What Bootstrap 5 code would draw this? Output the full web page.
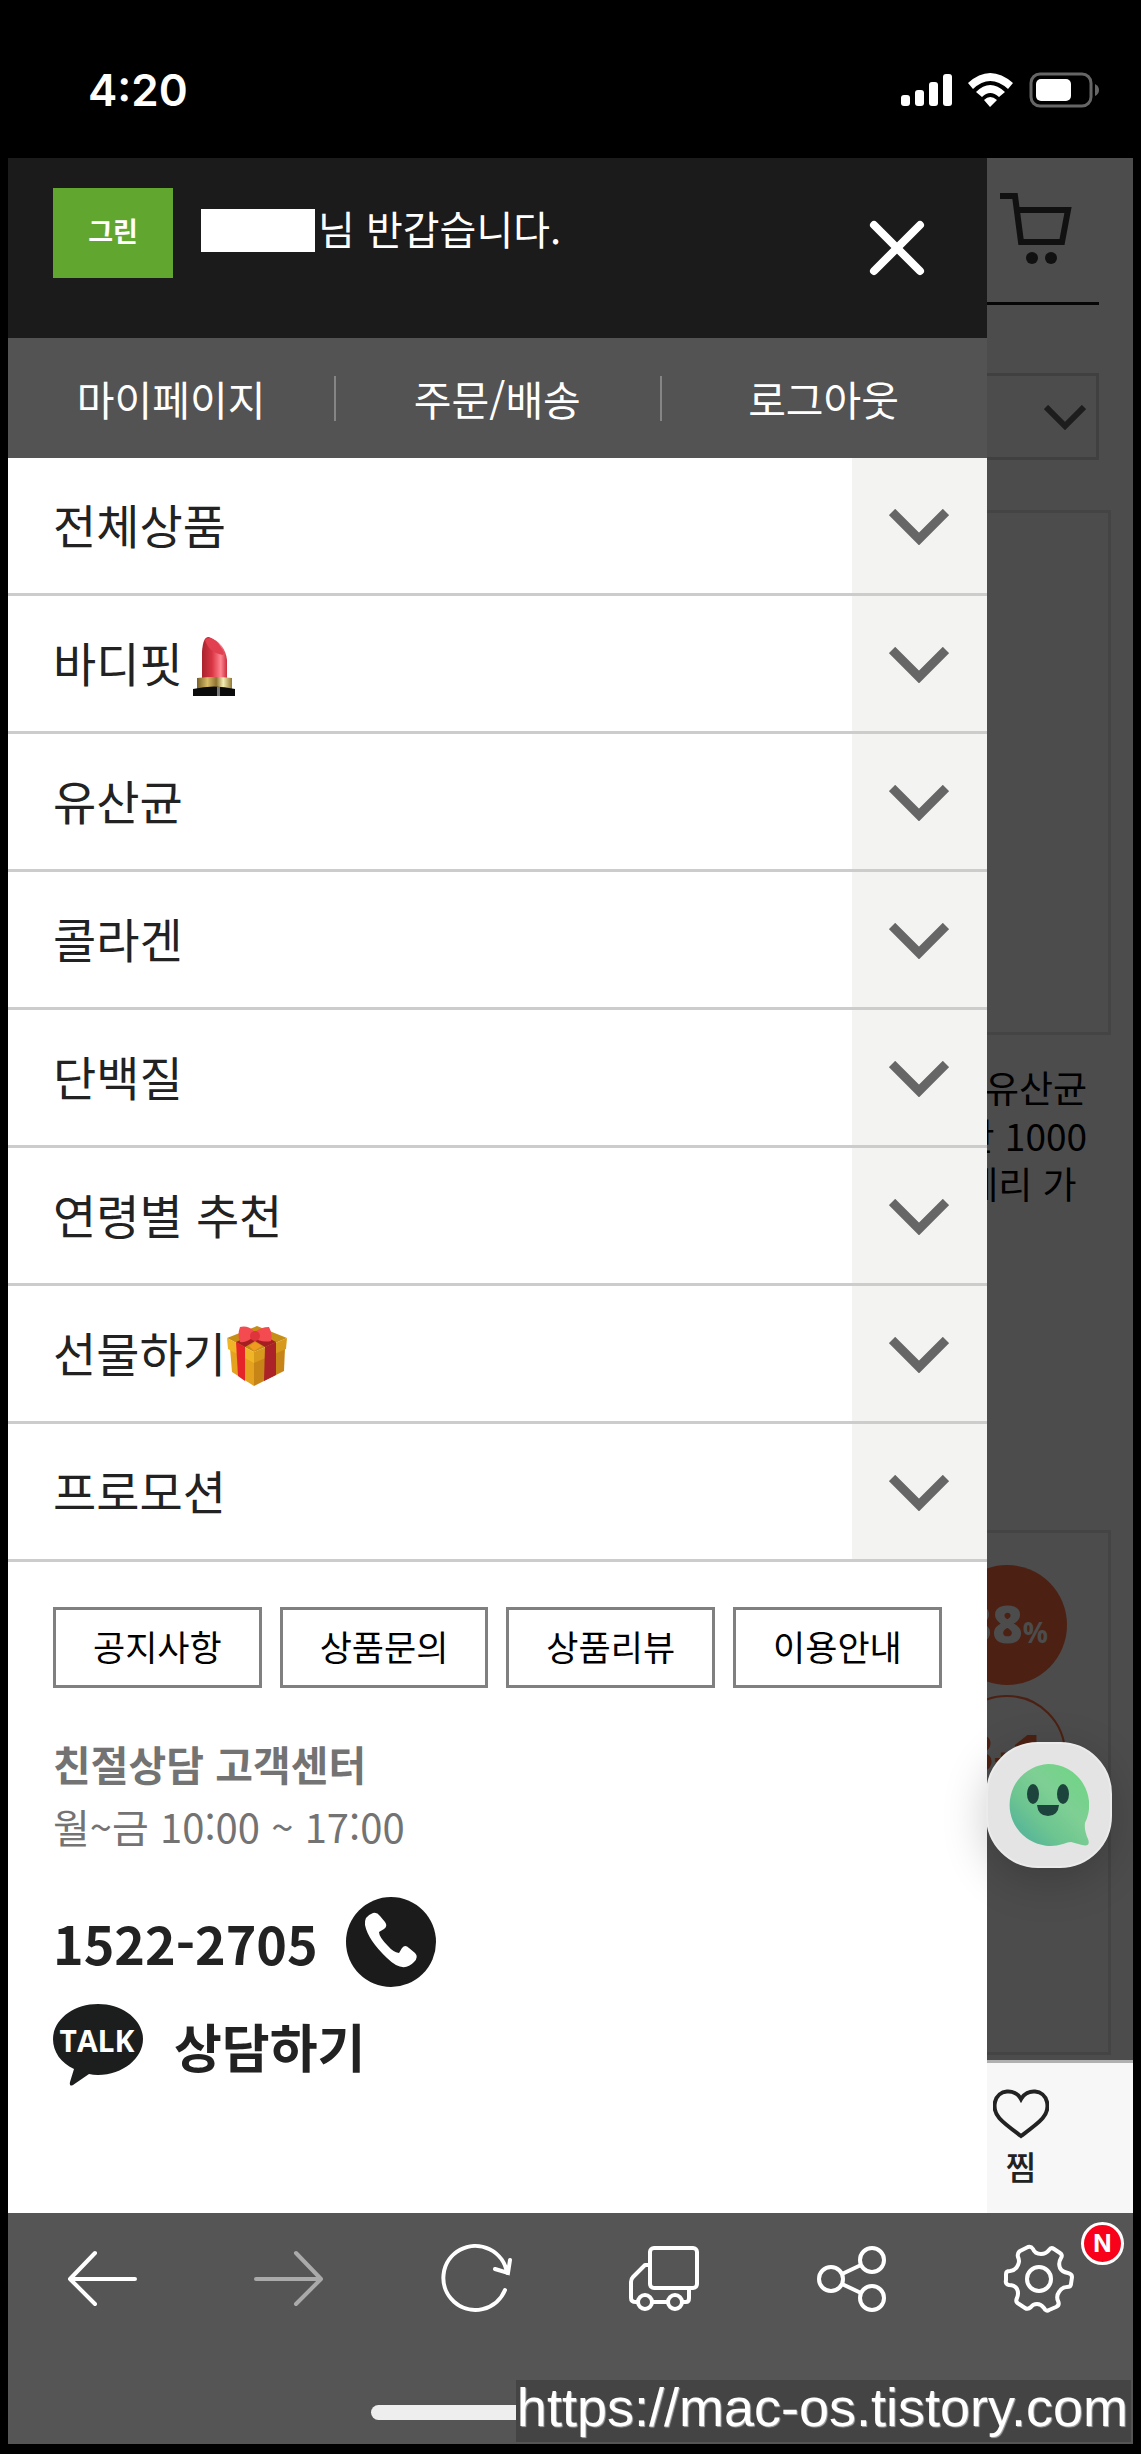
<!DOCTYPE html>
<html lang="ko">
<head>
<meta charset="utf-8">
<meta name="viewport" content="width=device-width, initial-scale=1">
<title>전체 메뉴</title>
<link href="https://cdn.jsdelivr.net/npm/bootstrap@5.3.0/dist/css/bootstrap.min.css" rel="stylesheet">
<style>
  body { background: #000; color: #222; font-family: "Noto Sans CJK KR", sans-serif; }
  a { color: inherit; text-decoration: none; }
  svg { display: block; flex: none; }
  button { color: inherit; }
  .status { height: 158px; padding: 22px 42px 0 88px; font: 600 44px/1 Inter, sans-serif; }
  .phone { padding: 0 8px 10px; }

  .drawer { flex: 0 0 87%; background: #fff; padding-bottom: 126px; }
  .drawer-top { background: #1b1b1b; height: 180px; padding: 30px 45px; font-size: 40px; line-height: 60px; }
  .brand { width: 120px; height: 90px; background: #61a72f; font-size: 27px; font-weight: 700; line-height: 86px; }
  .masked { width: 114px; height: 43px; margin-right: 3px; background: #fff; }
  .hello { height: 84px; }
  .hello span + span { padding-bottom: 4px; }
  .close-btn { padding: 0; margin: 31px 16px 0 0; }
  .tabs { background: #535353; height: 120px; font-size: 41px; line-height: 58px; }
  .tabs a + a::before { content: ""; position: absolute; left: 0; top: 7px; width: 2px; height: 45px; background: #858585; }

  .menu li { border-bottom: 3px solid #ccc; font-size: 47px; line-height: 60px; }
  .menu a { height: 135px; padding: 0 0 3px 45px; }
  .menu a svg { margin: 7px 0 0 1px; }
  .menu button { width: 135px; padding-top: 9px; background: #f3f3f1; }

  .quick { display: grid; grid-template-columns: repeat(4, 1fr); gap: 18px; padding: 45px 45px 0; }
  .quick a { height: 81px; border: 3px solid #808080; color: #000; font-size: 35px; line-height: 72px; }
  .center-info { padding: 44px 45px 0; color: #737373; font-size: 40px; line-height: 63px; }
  .center-info .fw-bold { font-size: 41px; }
  .contact { padding: 39px 45px 0; font-size: 52px; line-height: 81px; font-weight: 700; }

  .behind { min-width: 0; background: #4c4c4c; color: #000; }
  .cart-row { height: 147px; border-bottom: 3px solid #060606; margin-right: 34px; padding: 35px 27px 0 0; }
  .sorter { margin: 68px 34px 50px 0; }
  .sorter select { appearance: none; height: 87px; background: none; border: 3px solid #404040; border-left: 0; border-radius: 0; }
  .sorter svg { position: absolute; right: 13px; top: 32px; }
  .thumb { height: 525px; margin-right: 22px; border: 3px solid #444; border-left: 0; }
  .thumb svg { margin: 32px 39px 0 0; }
  .goods { height: 495px; padding: 28px 46px 0 0; font-size: 37px; line-height: 48px; }
  .wish { height: 153px; margin-top: 5px; background: #f7f7f7; border-top: 3px solid #b0b0b0; color: #222; padding: 26px 84px 0 0; }
  .wish a { width: 56px; font-size: 33px; line-height: 48px; font-weight: 500; }
  .wish svg { margin-bottom: 3px; }
  .chat { right: 21px; top: 1584px; width: 126px; height: 126px; padding: 0 2px 0 0; border: 2px solid #ebebeb; border-radius: 52px; background: #e4e4e4; box-shadow: 0 12px 45px rgba(0,0,0,.2); }

  .browser-bar { background: #555; height: 231px; }
  .browser-bar .tools { height: 131px; }
  .tools button { padding: 0; }
  .new-badge { right: 9px; top: 9px; width: 43px; height: 43px; border: 3px solid #fff; background: #f8021b; font: 700 24px/37px Inter, sans-serif; }
  .home-line { width: 400px; height: 15px; border-radius: 8px; background: #eee; margin-top: 61px; }
  .site-mark { right: 2px; bottom: 2px; height: 62px; padding: 0 3px 0 1px; background: #444; font: 54px/54px "Liberation Sans", sans-serif; text-shadow: 1px 1px 1px #aaa; }
</style>
</head>
<body>
<svg width="0" height="0" class="position-absolute" aria-hidden="true">
  <symbol id="down" viewBox="0 0 60 36"><path d="M3 3 30 30 57 3" fill="none" stroke="#666" stroke-width="9"/></symbol>
</svg>

<header class="status d-flex align-items-center justify-content-between text-white">
  <span>4:20</span>
  <svg width="199" height="36" viewBox="0 0 199 36" fill="#fff">
    <rect x="1" y="23" width="9" height="11" rx="3"/><rect x="15" y="18" width="9" height="16" rx="3"/><rect x="29" y="10" width="9" height="24" rx="3"/><rect x="43" y="2" width="9" height="32" rx="3"/>
    <path d="M68 11Q90-9 113 11L108 17Q90 1 73 17ZM76 20Q90 6 105 20L99 25Q90 17 82 25ZM84 28Q90 22 97 28L90 35Z"/>
    <rect x="131" y="2" width="60" height="32" rx="9" fill="none" stroke="#666" stroke-width="3"/>
    <rect x="136" y="7" width="35" height="22" rx="5"/><path d="M195 12q4 2 4 6t-4 6Z" fill="#666"/>
  </svg>
</header>

<div class="phone">
  <div class="position-relative d-flex">
    <nav class="drawer" aria-label="전체 메뉴">
      <div class="drawer-top d-flex text-white">
        <div class="brand text-center">그린</div>
        <div class="hello d-flex align-items-center ms-4 ps-1 flex-grow-1"><span class="masked"></span><span>님 반갑습니다.</span></div>
        <button class="btn close-btn align-self-start border-0" aria-label="닫기">
          <svg width="58" height="58" viewBox="0 0 58 58"><path d="M6 6 52 52M52 6 6 52" stroke="#fff" stroke-width="8" stroke-linecap="round"/></svg>
        </button>
      </div>
      <div class="tabs d-flex align-items-center text-white text-center">
        <a class="col-4" href="#">마이페이지</a><a class="col-4 position-relative" href="#">주문/배송</a><a class="col-4 position-relative" href="#">로그아웃</a>
      </div>
      <ul class="menu list-unstyled mb-0">
        <li class="d-flex"><a class="flex-grow-1 d-flex align-items-center" href="#">전체상품</a><button class="btn rounded-0 border-0 d-flex align-items-center justify-content-center" aria-label="전체상품 펼치기"><svg width="60" height="36"><use href="#down"/></svg></button></li>
        <li class="d-flex"><a class="flex-grow-1 d-flex align-items-center" href="#">바디핏
          <svg width="60" height="60" viewBox="0 0 60 60">
            <defs><linearGradient id="lip"><stop stop-color="#a8242f"/><stop offset=".4" stop-color="#d93543"/><stop offset=".75" stop-color="#ff8590"/><stop offset="1" stop-color="#c92c3c"/></linearGradient>
            <linearGradient id="gold"><stop stop-color="#766026"/><stop offset=".3" stop-color="#d9bc68"/><stop offset=".55" stop-color="#8f7430"/><stop offset=".75" stop-color="#f5eeb4"/><stop offset="1" stop-color="#927931"/></linearGradient></defs>
            <path d="M18 43V16Q19 0 25 1 41 7 43 24V43Z" fill="url(#lip)"/><path d="M21 4Q25-1 34 7 42 17 39 19 25 17 21 4Z" fill="#e04050"/>
            <path d="M13 42Q30 40 48 42V54H13Z" fill="url(#gold)"/><path d="M9 53Q30 48 51 53V60H9Z" fill="#0b0b0b"/><path d="M33 51h3v9h-3Z" fill="#777"/>
          </svg></a><button class="btn rounded-0 border-0 d-flex align-items-center justify-content-center" aria-label="바디핏 펼치기"><svg width="60" height="36"><use href="#down"/></svg></button></li>
        <li class="d-flex"><a class="flex-grow-1 d-flex align-items-center" href="#">유산균</a><button class="btn rounded-0 border-0 d-flex align-items-center justify-content-center" aria-label="유산균 펼치기"><svg width="60" height="36"><use href="#down"/></svg></button></li>
        <li class="d-flex"><a class="flex-grow-1 d-flex align-items-center" href="#">콜라겐</a><button class="btn rounded-0 border-0 d-flex align-items-center justify-content-center" aria-label="콜라겐 펼치기"><svg width="60" height="36"><use href="#down"/></svg></button></li>
        <li class="d-flex"><a class="flex-grow-1 d-flex align-items-center" href="#">단백질</a><button class="btn rounded-0 border-0 d-flex align-items-center justify-content-center" aria-label="단백질 펼치기"><svg width="60" height="36"><use href="#down"/></svg></button></li>
        <li class="d-flex"><a class="flex-grow-1 d-flex align-items-center" href="#">연령별 추천</a><button class="btn rounded-0 border-0 d-flex align-items-center justify-content-center" aria-label="연령별 추천 펼치기"><svg width="60" height="36"><use href="#down"/></svg></button></li>
        <li class="d-flex"><a class="flex-grow-1 d-flex align-items-center" href="#">선물하기
          <svg width="60" height="60" viewBox="0 0 60 60">
            <path d="M3 22 27 33V60L5 46Z" fill="#e5a21f"/><path d="M27 33 58 22 57 45 27 60Z" fill="#c78517"/>
            <path d="M0 12 30 0 60 12 27 26Z" fill="#c78e17"/><path d="M0 12 27 26V37L1 23Z" fill="#f0b526"/><path d="M27 26 60 12 59 23 27 37Z" fill="#d79a1c"/>
            <path d="M9 16 18 21V55L11 50Z" fill="#e5242a"/><path d="M38 21 49 16V49L37 55Z" fill="#ab2228"/><path d="M9 16 30 6 49 16 38 21 28 15 18 21Z" fill="#a51f22"/>
            <path d="M22 20 28 16 35 20 27 25Z" fill="#f09a20"/>
            <path d="M13 1Q10 9 13 16 20 17 26 11 33 17 44 15 46 8 42 1 34 1 28 6 21-1 13 1Z" fill="#f44b50"/><circle cx="28" cy="10" r="5" fill="#df343b"/>
          </svg></a><button class="btn rounded-0 border-0 d-flex align-items-center justify-content-center" aria-label="선물하기 펼치기"><svg width="60" height="36"><use href="#down"/></svg></button></li>
        <li class="d-flex"><a class="flex-grow-1 d-flex align-items-center" href="#">프로모션</a><button class="btn rounded-0 border-0 d-flex align-items-center justify-content-center" aria-label="프로모션 펼치기"><svg width="60" height="36"><use href="#down"/></svg></button></li>
      </ul>
      <div class="quick text-center"><a href="#">공지사항</a><a href="#">상품문의</a><a href="#">상품리뷰</a><a href="#">이용안내</a></div>
      <div class="center-info"><div class="fw-bold">친절상담 고객센터</div><div>월~금 10:00 ~ 17:00</div></div>
      <div class="contact">
        <a class="d-flex align-items-center" href="tel:1522-2705">1522-2705
          <svg class="ms-4" width="94" height="90" viewBox="-4 0 94 90"><circle cx="45" cy="45" r="45" fill="#1b1b1b"/><path d="M27 16Q31 15 34 19L39 25Q42 29 38 32L33 35Q33 40 42 49 47 55 53 56L56 51Q59 47 63 51L69 56Q73 60 68 65 57 77 41 61 22 43 19 28 18 19 27 16Z" fill="#fff"/></svg></a>
        <a class="d-flex align-items-center mt-3" href="#">
          <svg class="me-4" width="97" height="84" viewBox="0 0 97 84"><path d="M45 1C70 1 90 17 90 36S70 72 45 72Q40 72 36 71L20 82Q16 84 17 79L21 66C8 60 0 49 0 36 0 17 20 1 45 1Z" fill="#1c1e1d"/><text x="44" y="49" text-anchor="middle" font-family="Open Sans, sans-serif" font-weight="700" font-size="30" fill="#fff">TALK</text></svg>상담하기</a>
      </div>
    </nav>

    <main class="behind flex-grow-1 overflow-hidden">
      <div class="cart-row d-flex justify-content-end">
        <svg width="72" height="71" viewBox="0 0 72 71"><path d="M0 3H15L21 49H62L68 17H18" fill="none" stroke="#111" stroke-width="6"/><circle cx="32" cy="65" r="6" fill="#111"/><circle cx="51" cy="65" r="6" fill="#111"/></svg>
      </div>
      <div class="sorter position-relative"><select class="w-100 d-block" aria-label="정렬"><option></option></select>
        <svg width="42" height="25" viewBox="0 0 42 25"><path d="M2 2 21 21 40 2" fill="none" stroke="#1d1d1d" stroke-width="6"/></svg></div>
      <div class="thumb"></div>
      <div class="goods text-nowrap">
        <div class="d-flex justify-content-end">유산균</div><div class="d-flex justify-content-end">만 1000</div><div class="d-flex justify-content-end">베리 가&nbsp;</div>
      </div>
      <div class="thumb d-flex justify-content-end">
        <svg width="124" height="254" viewBox="-2 0 124 254"><circle cx="60" cy="60" r="60" fill="#4c2113"/><g font-family="Open Sans, sans-serif" font-weight="800" text-anchor="end"><text x="101" y="78" font-size="52" fill="#4c4c4c">38<tspan font-size="28" font-weight="700">%</tspan></text><text x="96" y="207" font-size="52" fill="#4c2113">3<tspan font-size="32">+</tspan>1</text></g><circle cx="60" cy="189" r="58" fill="none" stroke="#4c2113" stroke-width="2"/></svg>
      </div>
      <div class="wish d-flex justify-content-end">
        <a class="text-center" href="#"><svg width="56" height="50" viewBox="0 0 56 50"><path d="M28 10C22-1 5 0 2 13-1 26 9 33 28 47 47 33 57 26 54 13 51 0 34-1 28 10Z" fill="none" stroke="#222" stroke-width="4"/></svg>찜</a>
      </div>
    </main>

    <button class="chat position-absolute" aria-label="채팅 상담">
      <svg class="mx-auto" width="82" height="82" viewBox="0 0 82 82">
        <defs><linearGradient id="face" x1="0" y1="1" x2="1" y2="0"><stop stop-color="#49aca0"/><stop offset=".35" stop-color="#6dc590"/><stop offset=".6" stop-color="#7ecf94"/><stop offset="1" stop-color="#6bd780"/></linearGradient></defs>
        <path d="M41 0A41 41 0 0 1 78 59Q77 66 81 75 84 83 75 81L64 78Q61 78 56 80A41 41 0 1 1 41 0Z" fill="url(#face)"/>
        <ellipse cx="26" cy="30" rx="6" ry="10" fill="#1d443c"/><ellipse cx="56" cy="30" rx="6" ry="10" fill="#1d443c"/><path d="M30 41H52Q51 52 41 52T30 41Z" fill="#1d443c"/>
      </svg>
    </button>
  </div>

  <footer class="browser-bar position-relative">
    <div class="tools d-flex">
      <button class="btn border-0 col-2 d-flex align-items-center justify-content-center" aria-label="뒤로"><svg width="72" height="72" viewBox="0 0 72 72" fill="none" stroke="#fff" stroke-width="4" stroke-linecap="round" stroke-linejoin="round"><path d="M69 36H4M29 10 4 36 29 61"/></svg></button>
      <button class="btn border-0 col-2 d-flex align-items-center justify-content-center" aria-label="앞으로"><svg width="72" height="72" viewBox="0 0 72 72" fill="none" stroke="#aaa" stroke-width="4" stroke-linecap="round" stroke-linejoin="round"><path d="M3 36H68M43 10 68 36 43 61"/></svg></button>
      <button class="btn border-0 col-2 d-flex align-items-center justify-content-center" aria-label="새로고침"><svg width="72" height="72" viewBox="0 0 72 72" fill="none" stroke="#fff" stroke-width="4" stroke-linecap="round"><path d="M64 47A32 32 0 1 1 66 30M54 26 67 30 69 17"/></svg></button>
      <button class="btn border-0 col-2 d-flex align-items-center justify-content-center" aria-label="배송"><svg width="72" height="72" viewBox="0 0 72 72" fill="none" stroke="#fff" stroke-width="4" stroke-linejoin="round"><rect x="22" y="5" width="47" height="40" rx="4"/><path d="M22 22H17L5 34Q3 36 3 39V55Q3 59 8 59H10M24 59H40M55 59H58Q61 59 61 55V46"/><circle cx="17" cy="59" r="7"/><circle cx="47" cy="59" r="7"/></svg></button>
      <button class="btn border-0 col-2 d-flex align-items-center justify-content-center" aria-label="공유"><svg width="72" height="72" viewBox="0 0 72 72" fill="none" stroke="#fff" stroke-width="4"><circle cx="15" cy="36" r="12"/><circle cx="56" cy="17" r="12"/><circle cx="56" cy="55" r="12"/><path d="M26 31 45 22M26 41 45 50"/></svg></button>
      <button class="btn border-0 col-2 d-flex align-items-center justify-content-center position-relative" aria-label="설정">
        <svg width="72" height="72" viewBox="0 0 72 72" fill="none" stroke="#fff" stroke-width="4" stroke-linejoin="round"><circle cx="36" cy="36" r="12"/><path d="M25 4Q28 3 30 6 32 11 38 11 43 11 46 7 48 4 51 6L57 10Q60 12 58 15 55 20 57 25 59 29 65 30 69 31 69 34L68 41Q68 44 64 44 59 44 56 49 53 53 55 58 57 62 53 64L46 67Q43 69 41 65 38 61 34 61 30 61 28 64 25 67 22 65L16 61Q12 59 14 55 16 50 14 46 12 42 6 42 2 41 3 37V31Q3 28 7 28 13 27 15 22 17 18 15 14 14 10 17 8Z"/></svg>
        <span class="new-badge position-absolute rounded-circle text-white text-center">N</span></button>
    </div>
    <div class="home-line mx-auto"></div>
    <a class="site-mark position-absolute text-white" href="https://mac-os.tistory.com">https://mac-os.tistory.com</a>
  </footer>
</div>
<script src="https://cdn.jsdelivr.net/npm/bootstrap@5.3.0/dist/js/bootstrap.bundle.min.js"></script>
</body>
</html>
